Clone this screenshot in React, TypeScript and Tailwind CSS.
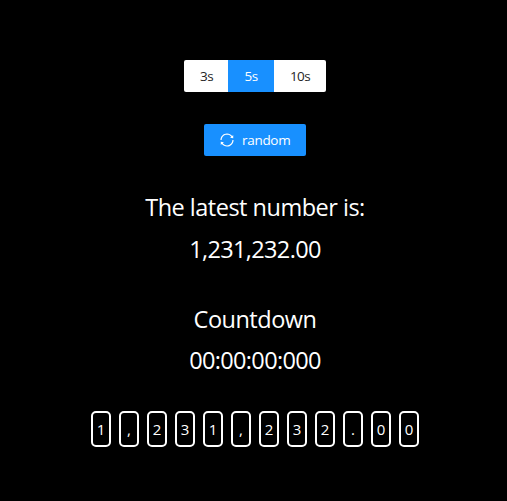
import { AiOutlineSync } from "react-icons/ai";

const intervals = [
  { label: "3s", style: "w-[44px] pl-px bg-white text-[#262626] rounded-l-[2px]" },
  { label: "5s", style: "w-[46px] bg-[#1890ff] text-white" },
  { label: "10s", style: "w-[52px] bg-white text-[#262626] rounded-r-[2px]" },
];

const value = "1,231,232.00";

export default function App() {
  return (
    <main className="flex h-[501px] w-[507px] flex-col items-center overflow-hidden bg-black pl-[3px] pt-[60px] font-['Open_Sans',sans-serif] text-white">
      <div className="flex h-8 shrink-0 text-[13.5px] tracking-[-0.6px]">
        {intervals.map((item) => (
          <button key={item.label} className={`flex h-8 items-center justify-center pt-px ${item.style}`}>
            {item.label}
          </button>
        ))}
      </div>

      <button className="mt-8 flex h-8 w-[102px] shrink-0 items-center rounded-[2px] bg-[#1890ff] pl-[15px] text-[13.5px]">
        <AiOutlineSync className="size-4 shrink-0" />
        <span className="ml-[7px] tracking-[-0.3px]">random</span>
      </button>

      <h2 className="mt-8 h-10 whitespace-nowrap text-[23.5px] leading-[38px] tracking-[-0.5px]">
        The latest number is:
      </h2>
      <p className="h-[42px] text-[23.5px] leading-[42px] tracking-[-0.65px]">{value}</p>

      <h2 className="mt-[30px] h-10 text-[23.5px] leading-[38px] tracking-[-0.5px]">Countdown</h2>
      <p className="h-[42px] text-[23.5px] leading-[40px] tracking-[-0.65px]">00:00:00:000</p>

      <div className="mt-[29px] flex gap-2">
        {value.split("").map((char, index) => (
          <span
            key={index}
            className="flex h-9 w-5 items-center justify-center rounded-[5px] border-2 border-white text-[15px]"
          >
            {char}
          </span>
        ))}
      </div>
    </main>
  );
}
